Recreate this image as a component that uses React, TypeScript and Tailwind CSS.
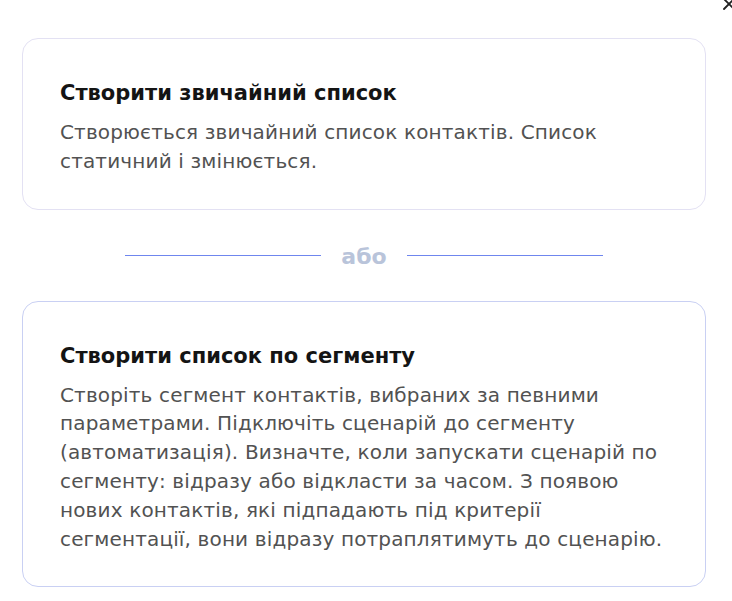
import { X } from 'lucide-react';

const cards = [
  {
    id: 'static',
    title: 'Створити звичайний список',
    text: 'Створюється звичайний список контактів. Список статичний і змінюється.',
    border: 'border-[#e3e1f3]',
  },
  {
    id: 'segment',
    title: 'Створити список по сегменту',
    text: 'Створіть сегмент контактів, вибраних за певними параметрами. Підключіть сценарій до сегменту (автоматизація). Визначте, коли запускати сценарій по сегменту: відразу або відкласти за часом. З появою нових контактів, які підпадають під критерії сегментації, вони відразу потраплятимуть до сценарію.',
    border: 'border-[#c9d0f3]',
  },
];

function Card({ title, text, border }: { title: string; text: string; border: string }) {
  return (
    <div className={`rounded-2xl border bg-white pl-[37px] pr-[30px] pt-10 pb-[33px] ${border}`}>
      <h3 className="text-[21px] leading-7 font-bold text-[#141414]">{title}</h3>
      <p className="mt-[11px] text-[20px] leading-[28.8px] tracking-[0.15px] text-[#525252]">{text}</p>
    </div>
  );
}

export default function App() {
  return (
    <div className="relative w-[732px] h-[601px] overflow-hidden bg-white font-['DejaVu_Sans',sans-serif]">
      <button className="absolute -top-[6px] -right-[7px] text-[#222]">
        <X size={20} strokeWidth={2.2} />
      </button>

      <div className="pl-[22px] pr-[26px] pt-[38px]">
        <Card {...cards[0]} />

        <div className="flex h-[91px] items-center justify-center gap-[18px]">
          <div className="h-px w-[196px] bg-[#6f86ee]" />
          <span className="w-[50px] pt-[3px] text-center text-[22px] font-bold leading-none text-[#b9c4da]">або</span>
          <div className="h-px w-[196px] bg-[#6f86ee]" />
        </div>

        <Card {...cards[1]} />
      </div>
    </div>
  );
}
